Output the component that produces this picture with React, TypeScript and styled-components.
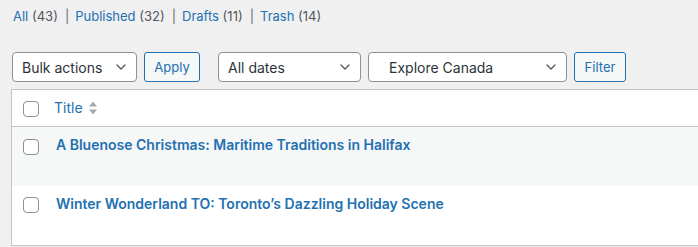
import React from "react";
import styled, { createGlobalStyle } from "styled-components";

const Global = createGlobalStyle`
  html, body { margin: 0; padding: 0; background: #f0f0f1; overflow: hidden; }
  body { font-family: Inter, "Noto Sans", sans-serif; color: #3c434a; font-size: 13px; }
`;

const Page = styled.div`
  padding: 0 0 0 11px;
  overflow: hidden;
`;

const SubNav = styled.ul`
  list-style: none;
  margin: 0;
  padding: 7px 0 0 2px;
  display: flex;
  font-size: 13px;
  line-height: 18px;
  color: #646970;
`;

const SubItem = styled.li`
  display: flex;
  white-space: pre;
`;

const SubLink = styled.a`
  color: #2271b1;
  text-decoration: none;
`;

const Count = styled.span`
  color: #50575e;
`;

const Sep = styled.span`
  color: #646970;
  padding: 0 6px 0 7px;
`;

const Toolbar = styled.div`
  display: flex;
  align-items: center;
  margin-top: 27px;
  padding-left: 1px;
  height: 30px;
`;

const SelectBox = styled.div<{ $w: number; $pl?: number; $mr?: number }>`
  box-sizing: border-box;
  width: ${(p) => p.$w}px;
  height: 30px;
  border: 1px solid #8c8f94;
  border-radius: 4px;
  background: #fff;
  display: flex;
  align-items: center;
  justify-content: space-between;
  padding: 0 10px 0 ${(p) => p.$pl ?? 9}px;
  margin-right: ${(p) => p.$mr ?? 7}px;
  font-size: 14px;
  color: #2c3338;
`;

const Button = styled.button<{ $w: number; $mr?: number }>`
  box-sizing: border-box;
  width: ${(p) => p.$w}px;
  height: 30px;
  border: 1px solid #2271b1;
  border-radius: 3px;
  background: #f6f7f7;
  color: #2271b1;
  font-family: inherit;
  font-size: 13px;
  padding: 0;
  margin-right: ${(p) => p.$mr ?? 0}px;
`;

const Table = styled.div`
  margin-top: 7px;
  margin-right: -4px;
  border: 1px solid #c3c4c7;
  background: #fff;
`;

const HeadRow = styled.div`
  display: flex;
  align-items: flex-start;
  height: 36px;
  border-bottom: 1px solid #c3c4c7;
`;

const Row = styled.div<{ $alt?: boolean }>`
  display: flex;
  align-items: flex-start;
  height: 59px;
  background: ${(p) => (p.$alt ? "#f6f7f7" : "#fff")};
`;

const CheckCell = styled.div<{ $top: number }>`
  width: 42px;
  padding-top: ${(p) => p.$top}px;
  padding-left: 11px;
  box-sizing: border-box;
`;

const Check = styled.span`
  display: block;
  box-sizing: border-box;
  width: 16px;
  height: 16px;
  border: 1px solid #8c8f94;
  border-radius: 4px;
  background: #fff;
`;

const HeadTitle = styled.a`
  display: flex;
  align-items: center;
  gap: 6px;
  margin-top: 9px;
  color: #2271b1;
  text-decoration: none;
  font-size: 14px;
  line-height: 18px;
`;

const PostTitle = styled.a`
  margin-top: 8px;
  margin-left: 2px;
  color: #2271b1;
  font-size: 14px;
  font-weight: 600;
  line-height: 20px;
  text-decoration: none;
`;

const Chevron = () => (
  <svg width="10" height="6" viewBox="0 0 10 6" fill="none">
    <path d="M1 1l4 4 4-4" stroke="#50575e" strokeWidth="1.3" strokeLinecap="round" strokeLinejoin="round" />
  </svg>
);

const SortIcon = () => (
  <svg width="8" height="16" viewBox="0 0 8 16">
    <path d="M4 1.5L8 6.5H0z" fill="#a7aaad" />
    <path d="M4 14.5L8 9.5H0z" fill="#a7aaad" />
  </svg>
);

const views = [
  { label: "All", count: 43 },
  { label: "Published", count: 32 },
  { label: "Drafts", count: 11 },
  { label: "Trash", count: 14 },
];

const posts = [
  "A Bluenose Christmas: Maritime Traditions in Halifax",
  "Winter Wonderland TO: Toronto’s Dazzling Holiday Scene",
];

export default function App() {
  return (
    <>
      <Global />
      <Page>
        <SubNav>
          {views.map((v, i) => (
            <SubItem key={v.label}>
              <SubLink href="#">{v.label}</SubLink>
              <Count> ({v.count})</Count>
              {i < views.length - 1 && <Sep>|</Sep>}
            </SubItem>
          ))}
        </SubNav>
        <Toolbar>
          <SelectBox $w={125}>
            <span>Bulk actions</span>
            <Chevron />
          </SelectBox>
          <Button $w={56} $mr={18}>Apply</Button>
          <SelectBox $w={143}>
            <span>All dates</span>
            <Chevron />
          </SelectBox>
          <SelectBox $w={199} $pl={20}>
            <span>Explore Canada</span>
            <Chevron />
          </SelectBox>
          <Button $w={52}>Filter</Button>
        </Toolbar>
        <Table>
          <HeadRow>
            <CheckCell $top={11}>
              <Check />
            </CheckCell>
            <HeadTitle href="#">
              <span>Title</span>
              <SortIcon />
            </HeadTitle>
          </HeadRow>
          {posts.map((t, i) => (
            <Row key={t} $alt={i % 2 === 0}>
              <CheckCell $top={12 - i}>
                <Check />
              </CheckCell>
              <PostTitle href="#">{t}</PostTitle>
            </Row>
          ))}
        </Table>
      </Page>
    </>
  );
}
